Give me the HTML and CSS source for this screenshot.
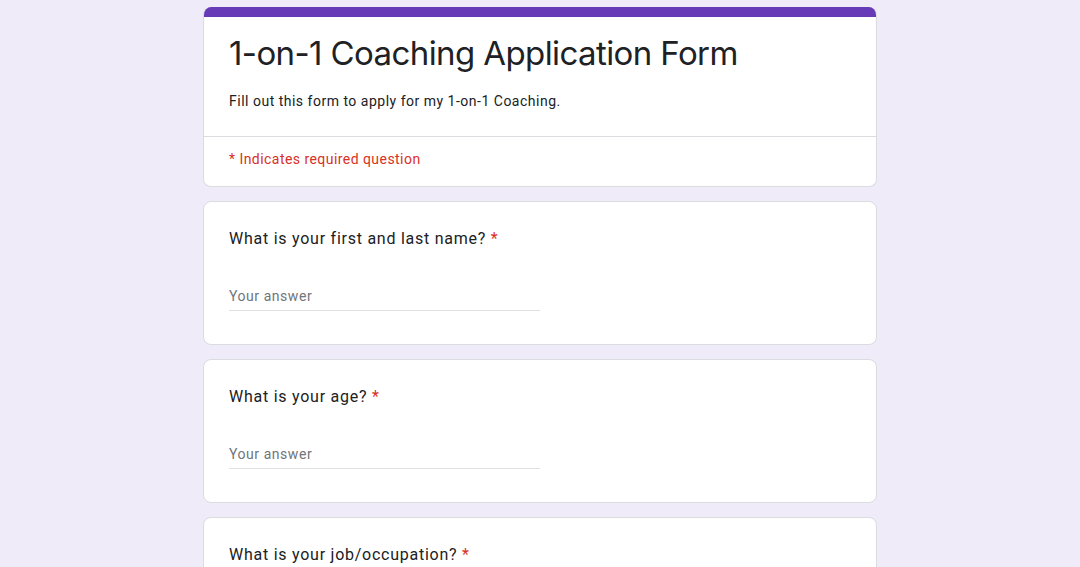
FILE: index.html
```html
<!DOCTYPE html>
<html>
<head>
<meta charset="utf-8">
<link rel="stylesheet" href="styles.css">
</head>
<body>
<div class="form">
  <div class="card header">
    <div class="bar"></div>
    <div class="head-main">
      <h1 class="title">1-on-1 Coaching Application Form</h1>
      <p class="desc">Fill out this form to apply for my 1-on-1 Coaching.</p>
    </div>
    <div class="head-req">* Indicates required question</div>
  </div>
  <div class="card question">
    <div class="q">What is your first and last name? <span class="star">*</span></div>
    <div class="answer">Your answer</div>
  </div>
  <div class="card question">
    <div class="q">What is your age? <span class="star">*</span></div>
    <div class="answer">Your answer</div>
  </div>
  <div class="card question">
    <div class="q">What is your job/occupation? <span class="star">*</span></div>
    <div class="answer">Your answer</div>
  </div>
</div>
</body>
</html>
```
FILE: styles.css
```css
html, body {
  margin: 0;
  padding: 0;
  background: #f0ebf8;
  font-family: Roboto, "Liberation Sans", sans-serif;
  color: #202124;
}
.form {
  width: 674px;
  margin: 7px auto 0;
  display: flex;
  flex-direction: column;
  gap: 14px;
}
.card {
  background: #fff;
  border: 1px solid #dadce0;
  border-radius: 8px;
  overflow: hidden;
}
.header {
  border-top: none;
}
.bar {
  height: 10px;
  background: #673ab7;
}
.head-main {
  padding: 14px 25px 25px;
  border-bottom: 1px solid #dadce0;
}
.title {
  margin: 0;
  font-family: Inter, "Open Sans", sans-serif;
  font-weight: 400;
  font-size: 33px;
  letter-spacing: -0.6px;
  line-height: 44px;
}
.desc {
  margin: 16px 0 0;
  font-size: 14px;
  line-height: 20px;
  letter-spacing: 0.5px;
}
.head-req {
  padding: 12px 25px 17px;
  font-size: 14px;
  line-height: 20px;
  letter-spacing: 0.45px;
  color: #d93025;
}
.question {
  padding: 25px 25px 33px;
}
.q {
  font-size: 16px;
  line-height: 24px;
  letter-spacing: 0.75px;
}
.star {
  color: #d93025;
}
.answer {
  margin-top: 35px;
  width: 311px;
  padding-bottom: 4px;
  border-bottom: 1px solid #e0e0e0;
  font-size: 14px;
  line-height: 20px;
  letter-spacing: 0.55px;
  color: #70757a;
}
```
